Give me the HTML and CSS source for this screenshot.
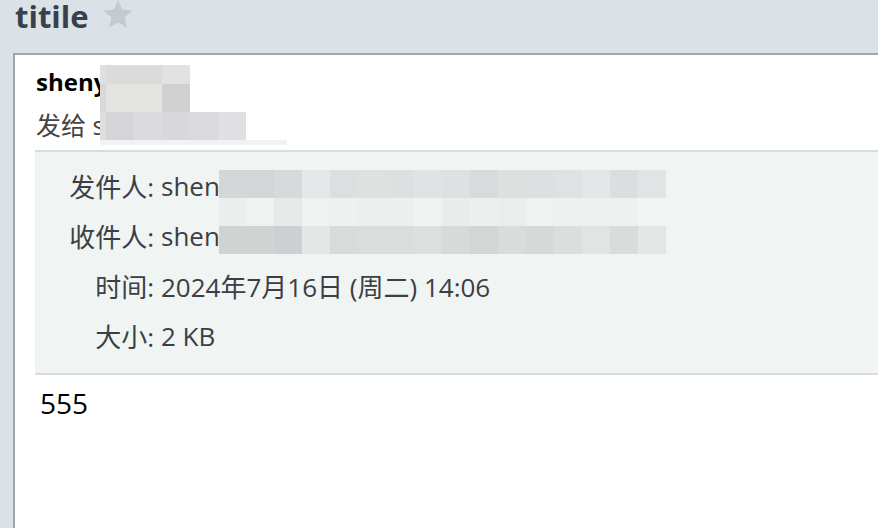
FILE: index.html
```html
<!DOCTYPE html>
<html lang="zh-CN">
<head>
<meta charset="utf-8">
<title>titile</title>
<link rel="stylesheet" href="styles.css">
</head>
<body>
<header class="head">
  <h1 class="title">titile</h1>
  <svg class="star" viewBox="0 0 24 24" width="32" height="32"><path d="M12 1.5l3.1 7.2 7.8.7-5.9 5.2 1.8 7.7L12 18.3l-6.8 4 1.8-7.7-5.9-5.2 7.8-.7z"/></svg>
</header>
<main class="card">
  <div class="from-name">sheny</div>
  <div class="to-line">发给 s</div>
  <section class="info">
    <div class="row"><span class="label">发件人:</span><span class="value">shen</span></div>
    <div class="row"><span class="label">收件人:</span><span class="value">shen</span></div>
    <div class="row"><span class="label">时间:</span><span class="value">2024年7月16日 (周二) 14:06</span></div>
    <div class="row"><span class="label">大小:</span><span class="value">2 KB</span></div>
  </section>
  <div class="body">555</div>

  <div class="mosaic mosaic-top">
    <div class="mr mt1"></div>
    <div class="mr mt2"></div>
    <div class="mr mt3"></div>
    <div class="mr mt4"></div>
  </div>
  <div class="mosaic mosaic-info">
    <div class="mr mi1"></div>
    <div class="mr mi2"></div>
    <div class="mr mi3"></div>
  </div>
</main>
</body>
</html>
```
FILE: styles.css
```css
html, body {
  margin: 0;
  padding: 0;
}
body {
  background: #dae1e7;
  font-family: "Open Sans", "Noto Sans CJK SC", sans-serif;
  overflow: hidden;
  width: 878px;
  height: 528px;
  display: flex;
  flex-direction: column;
}
.head {
  height: 53px;
  flex: none;
  display: flex;
  align-items: flex-start;
  padding-left: 15px;
  gap: 13px;
  box-sizing: border-box;
}
.title {
  margin: 0;
  margin-top: -3px;
  font-size: 31px;
  font-weight: 700;
  line-height: 38px;
  color: #3a4049;
}
.star {
  fill: #c5cad0;
  margin-top: -2px;
}
.card {
  position: relative;
  flex: 1;
  margin-left: 13px;
  background: #fff;
  border-top: 2px solid #a1a6a9;
  border-left: 2px solid #a1a6a9;
  padding-top: 10px;
  box-sizing: border-box;
  overflow: hidden;
}
.from-name {
  padding-left: 21px;
  font-size: 24px;
  font-weight: 700;
  line-height: 34px;
  color: #000;
}
.to-line {
  margin-top: 9px;
  padding-left: 21px;
  font-size: 25px;
  line-height: 34px;
  color: #444;
}
.info {
  margin: 8px 0 0 20px;
  background: #f0f4f3;
  border-top: 2px solid #d9dcdc;
  border-bottom: 2px solid #d9dcdc;
  padding: 9px 0 12px;
}
.row {
  display: grid;
  grid-template-columns: 119px auto;
  column-gap: 7px;
  height: 50px;
  align-items: center;
  font-size: 26px;
  color: #3b3f45;
}
.label {
  text-align: right;
}
.body {
  margin-top: 10px;
  padding-left: 25px;
  font-size: 28px;
  line-height: 36px;
  color: #000;
}
.mosaic {
  position: absolute;
}
.mr {
  height: 28px;
}
.mosaic-top {
  left: 85px;
  top: 10px;
}
.mosaic-top .mt1 {
  width: 90px;
  height: 19px;
  background: linear-gradient(to right, #e0e0e0 0 6px, #dcdbd9 6px 62px, #e2e2e4 62px 90px);
}
.mosaic-top .mt2 {
  width: 90px;
  background: linear-gradient(to right, #d8d8d8 0 6px, #e3e3e1 6px 62px, #d0d0d2 62px 90px);
}
.mosaic-top .mt3 {
  width: 146px;
  background: linear-gradient(to right, #dedede 0 6px, #d5d5d7 6px 34px, #dbdbdd 34px 62px, #d8d8da 62px 90px, #dadadc 90px 118px, #e0e0e2 118px 146px);
}
.mosaic-top .mt4 {
  width: 187px;
  height: 5px;
  background: #eff3f3;
}
.mosaic-info {
  left: 204px;
  top: 115px;
  width: 447px;
}
.mi1 {
  background: linear-gradient(to right,
    #d3d7d7 0 27px, #d2d6d6 27px 55px, #d6dada 55px 83px, #e5e8e8 83px 111px,
    #dcdfdf 111px 139px, #dde1e0 139px 167px, #dde0e0 167px 195px, #dfe3e3 195px 223px,
    #dde1e1 223px 251px, #d7dbdb 251px 279px, #dce0df 279px 307px, #dce0e0 307px 335px,
    #dfe2e2 335px 363px, #e4e7e7 363px 391px, #dadede 391px 419px, #e2e5e5 419px 447px);
}
.mi2 {
  background: linear-gradient(to right,
    #eaeeed 0 27px, #eef2f1 27px 55px, #e5e9e9 55px 83px, #eef2f1 83px 111px,
    #edf1f0 111px 139px, #ebefee 139px 167px, #ebefee 167px 195px, #eff3f2 195px 223px,
    #e8eceb 223px 251px, #ebefee 251px 279px, #e9edec 279px 307px, #eef2f1 307px 335px,
    #edf1f0 335px 363px, #ecf0ef 363px 391px, #edf1f0 391px 419px, #f0f4f3 419px 447px);
}
.mi3 {
  background: linear-gradient(to right,
    #cfd3d4 0 27px, #cfd3d4 27px 55px, #ccd0d2 55px 83px, #e4e7e7 83px 111px,
    #d7dbdb 111px 139px, #d9dddc 139px 167px, #d9dddd 167px 195px, #dbdfdf 195px 223px,
    #d6dada 223px 251px, #d2d6d6 251px 279px, #d8dcdc 279px 307px, #d5d9d9 307px 335px,
    #dadede 335px 363px, #e0e4e3 363px 391px, #d8dcdc 391px 419px, #e3e6e6 419px 447px);
}
```
